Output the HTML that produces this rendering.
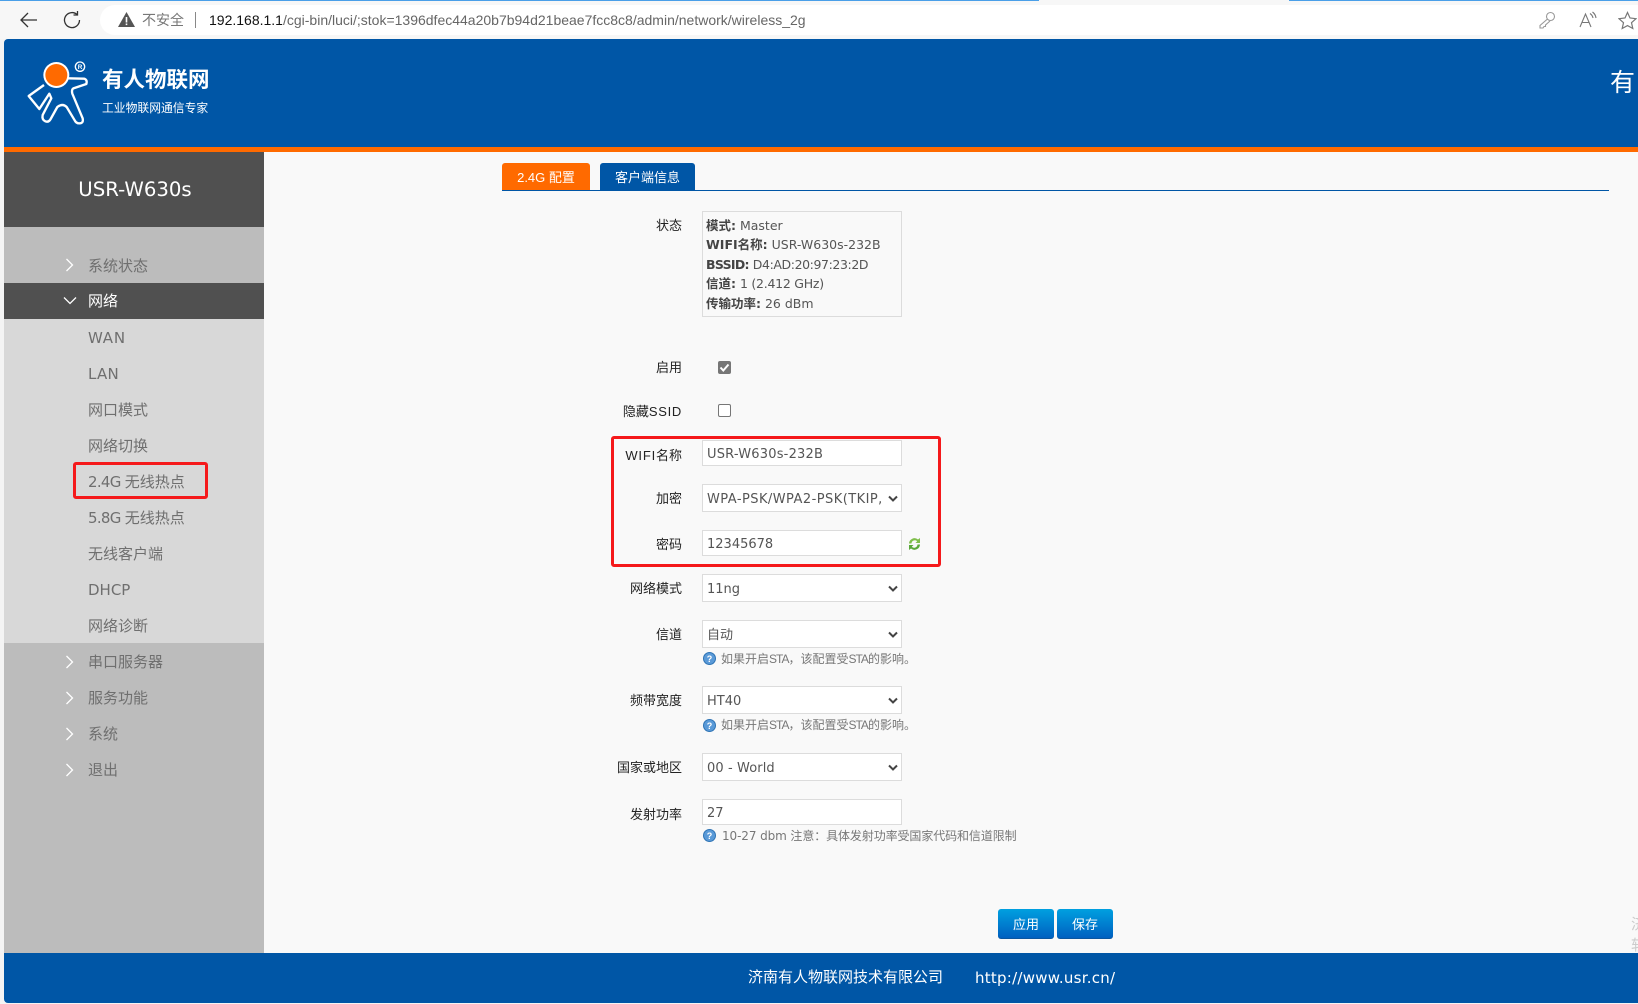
<!DOCTYPE html>
<html lang="zh-CN"><head><meta charset="utf-8"><title>USR-W630s</title>
<style>
html,body{margin:0;padding:0;width:1638px;height:1004px;overflow:hidden;background:#f4f4f4}
body{position:relative;font-family:"Liberation Sans","Noto Sans CJK SC",sans-serif}
.a{position:absolute;white-space:nowrap}
.d{font-family:"DejaVu Sans","Noto Sans CJK SC",sans-serif}
.nav{position:absolute;left:88px;height:24px;line-height:24px;font-size:15px;color:#6f6f6f;white-space:nowrap;font-family:"DejaVu Sans","Noto Sans CJK SC",sans-serif}
.lb{position:absolute;right:956px;height:20px;line-height:20px;font-size:13px;color:#222;white-space:nowrap;text-align:right;font-family:"Liberation Sans","Noto Sans CJK SC",sans-serif}
.f{position:absolute;left:702px;width:198px;background:#fff;border:1px solid #dcdcdc;color:#555;font:13px/28px "DejaVu Sans","Noto Sans CJK SC",sans-serif;white-space:nowrap;overflow:hidden;text-indent:4px}
.f svg{position:absolute;right:3px;top:50%;margin-top:-3px}
.h{position:absolute;left:721px;height:16px;line-height:16px;font-size:12px;color:#777;white-space:nowrap}
.h span{letter-spacing:-1px}
.q{position:absolute;left:703px;width:13px;height:13px}
.ch{position:absolute;left:65px}
b{color:#444}
</style></head><body>
<!-- browser chrome -->
<div class="a" style="left:0;top:0;width:1638px;height:39px;background:#f7f7f7"></div>
<div class="a" style="left:0;top:0;width:1039px;height:1px;background:#4a9fe8"></div>
<div class="a" style="left:1289px;top:0;width:349px;height:1px;background:#4a9fe8"></div>
<div class="a" style="left:100px;top:5px;width:1538px;height:30px;background:#fff;border-radius:15px 0 0 15px"></div>
<svg class="a" style="left:18px;top:10px" width="20" height="20" viewBox="0 0 20 20" fill="none" stroke="#333" stroke-width="1.3"><path d="M19 10H3M10 3L3 10L10 17"/></svg>
<svg class="a" style="left:62px;top:10px" width="20" height="20" viewBox="0 0 20 20" fill="none" stroke="#333" stroke-width="1.3"><path d="M15 4.5A7.5 7.5 0 1 0 17.5 10"/><path d="M15.5 1V5H11.5"/></svg>
<svg class="a" style="left:118px;top:12px" width="17" height="15" viewBox="0 0 17 15"><path d="M8.5 0L17 15H0Z" fill="#555"/><rect x="7.7" y="5" width="1.6" height="5.5" fill="#fff"/><rect x="7.7" y="11.5" width="1.6" height="1.6" fill="#fff"/></svg>
<div class="a" style="left:142px;top:10px;height:20px;line-height:20px;font-size:14px;color:#777">不安全</div>
<div class="a" style="left:195px;top:12px;width:1px;height:16px;background:#888"></div>
<div class="a" style="left:209px;top:10px;height:20px;line-height:20px;font-size:14px;color:#666"><span style="color:#111">192.168.1.1</span>/cgi-bin/luci/;stok=1396dfec44a20b7b94d21beae7fcc8c8/admin/network/wireless_2g</div>
<svg class="a" style="left:1537px;top:11px" width="20" height="18" viewBox="0 0 20 18" fill="none" stroke="#999" stroke-width="1.1"><circle cx="13.5" cy="5.5" r="4"/><path d="M10.5 8L3 14.5V17H6L7 15.5H8.5V14L13 10"/></svg>
<svg class="a" style="left:1578px;top:11px" width="20" height="18" viewBox="0 0 20 18" fill="none" stroke="#777" stroke-width="1.1"><path d="M2 16L7.5 3L13 16M4 11.5H11"/><path d="M12 2.5A7 7 0 0 1 15 7M14.5 1A9 9 0 0 1 18 7"/></svg>
<svg class="a" style="left:1618px;top:11px" width="19" height="19" viewBox="0 0 19 19" fill="none" stroke="#777" stroke-width="1.2"><path d="M9.5 1.5L12 7L18 7.7L13.5 11.7L14.8 17.5L9.5 14.6L4.2 17.5L5.5 11.7L1 7.7L7 7Z"/></svg>

<!-- page -->
<div class="a" style="left:4px;top:39px;width:1634px;height:964px;background:#f9f9f9;border-radius:4px 0 0 4px;overflow:hidden">
  <div class="a" style="left:0;top:0;width:1634px;height:108px;background:#0056a6"></div>
  <div class="a" style="left:0;top:108px;width:1634px;height:5px;background:#ff6a00"></div>
  <div class="a" style="left:0;top:113px;width:260px;height:801px;background:#bcbcbc"></div>
  <div class="a" style="left:0;top:113px;width:260px;height:75px;background:#505050"></div>
  <div class="a" style="left:0;top:244px;width:260px;height:36px;background:#505050"></div>
  <div class="a" style="left:0;top:280px;width:260px;height:324px;background:#d8d8d8"></div>
  <div class="a" style="left:0;top:914px;width:1634px;height:50px;background:#0056a6"></div>
</div>

<!-- logo -->
<svg class="a" style="left:22px;top:55px" width="72" height="75" viewBox="0 0 216 225">
<path d="M138 70L186 71Q197 74 193 87L154 100Q148 104 151 116L182 190Q185 205 173 205Q163 206 158 196L134 156Q122 144 106 156L86 192Q80 203 70 199Q59 194 62 180L88 130L82 116L52 162L20 123L66 90" fill="none" stroke="#fff" stroke-width="7" stroke-linejoin="round"/>
<circle cx="103" cy="60" r="39" fill="#fff"/><circle cx="103" cy="60" r="33" fill="#ff6a00"/>
<circle cx="174" cy="35" r="14" fill="none" stroke="#fff" stroke-width="4"/>
<text x="174" y="42" font-size="19" font-weight="bold" fill="#fff" text-anchor="middle" font-family="Liberation Sans">R</text>
</svg>
<div class="a" style="left:102px;top:67px;height:26px;line-height:26px;font-size:21.5px;font-weight:bold;color:#fff">有人物联网</div>
<div class="a" style="left:102px;top:99px;height:18px;line-height:18px;font-size:11.8px;color:#fff">工业物联网通信专家</div>
<div class="a" style="left:1610px;top:67px;height:32px;line-height:32px;font-size:25px;color:#fff">有</div>

<!-- sidebar -->
<div class="a d" style="left:5px;width:260px;top:176px;height:28px;line-height:28px;text-align:center;font-size:19.7px;color:#fff">USR-W630s</div>
<svg class="ch" style="top:258px" width="9" height="14" viewBox="0 0 9 14" fill="none" stroke="#fff" stroke-width="1.3"><path d="M1.5 1L7.5 7L1.5 13"/></svg>
<svg class="ch" style="left:63px;top:296px" width="14" height="9" viewBox="0 0 14 9" fill="none" stroke="#fff" stroke-width="1.3"><path d="M1 1.5L7 7.5L13 1.5"/></svg>
<svg class="ch" style="top:655px" width="9" height="14" viewBox="0 0 9 14" fill="none" stroke="#fff" stroke-width="1.3"><path d="M1.5 1L7.5 7L1.5 13"/></svg>
<svg class="ch" style="top:691px" width="9" height="14" viewBox="0 0 9 14" fill="none" stroke="#fff" stroke-width="1.3"><path d="M1.5 1L7.5 7L1.5 13"/></svg>
<svg class="ch" style="top:727px" width="9" height="14" viewBox="0 0 9 14" fill="none" stroke="#fff" stroke-width="1.3"><path d="M1.5 1L7.5 7L1.5 13"/></svg>
<svg class="ch" style="top:763px" width="9" height="14" viewBox="0 0 9 14" fill="none" stroke="#fff" stroke-width="1.3"><path d="M1.5 1L7.5 7L1.5 13"/></svg>
<div class="nav" style="top:254px">系统状态</div>
<div class="nav" style="top:289px;color:#fff">网络</div>
<div class="nav" style="top:326px;letter-spacing:.8px">WAN</div>
<div class="nav" style="top:362px;letter-spacing:.3px">LAN</div>
<div class="nav" style="top:398px">网口模式</div>
<div class="nav" style="top:434px">网络切换</div>
<div class="nav" style="top:470px"><span style="letter-spacing:-.7px">2.4G </span>无线热点</div>
<div class="nav" style="top:506px"><span style="letter-spacing:-.7px">5.8G </span>无线热点</div>
<div class="nav" style="top:542px">无线客户端</div>
<div class="nav" style="top:578px">DHCP</div>
<div class="nav" style="top:614px">网络诊断</div>
<div class="nav" style="top:650px">串口服务器</div>
<div class="nav" style="top:686px">服务功能</div>
<div class="nav" style="top:722px">系统</div>
<div class="nav" style="top:758px">退出</div>
<div class="a" style="left:73px;top:462px;width:129px;height:31px;border:3px solid #f5191b;border-radius:3px"></div>

<!-- tabs -->
<div class="a" style="left:502px;top:163px;width:88px;height:28px;line-height:29px;background:#ff6a00;border-radius:3px 3px 0 0;color:#fff;font-size:13px;text-align:center">2.4G 配置</div>
<div class="a" style="left:600px;top:163px;width:95px;height:28px;line-height:29px;background:#0056a6;border-radius:3px 3px 0 0;color:#fff;font-size:13px;text-align:center">客户端信息</div>
<div class="a" style="left:502px;top:190px;width:1107px;height:1px;background:#0056a6"></div>

<!-- status -->
<div class="lb" style="top:216px">状态</div>
<div class="a d" style="left:702px;top:211px;width:198px;height:104px;background:#f9f9f9;border:1px solid #dcdcdc;font-size:12.5px;line-height:19.5px;color:#555;padding:0;white-space:nowrap;">
<div style="padding:3.5px 0 0 3px"><b>模式:</b> Master<br><b>WIFI名称:</b> USR-W630s-232B<br><b style="letter-spacing:-.7px">BSSID:</b> <span style="letter-spacing:-.4px">D4:AD:20:97:23:2D</span><br><b>信道:</b> <span style="letter-spacing:-.25px">1 (2.412 GHz)</span><br><b>传输功率:</b> 26 dBm</div></div>

<div class="lb" style="top:358px">启用</div>
<div class="a" style="left:718px;top:361px;width:13px;height:13px;background:#767676;border-radius:2px"><svg width="13" height="13" viewBox="0 0 13 13" fill="none" stroke="#fff" stroke-width="2"><path d="M2.5 6.5L5.3 9.5L10.5 3.5"/></svg></div>
<div class="lb" style="top:402px"><span>隐藏</span><span style="letter-spacing:.7px">SSID</span></div>
<div class="a" style="left:718px;top:404px;width:11px;height:11px;background:#fff;border:1px solid #767676;border-radius:2px"></div>

<div class="lb" style="top:446px"><span style="letter-spacing:.8px">WIFI</span>名称</div>
<div class="f" style="top:440px;height:24px;letter-spacing:.2px">USR-W630s-232B</div>
<div class="lb" style="top:489px">加密</div>
<div class="f" style="top:484px;height:26px;line-height:30px;letter-spacing:.45px">WPA-PSK/WPA2-PSK(TKIP,<div style="position:absolute;right:0;top:0;width:17px;height:26px;background:#fff"></div><svg width="10" height="8" viewBox="0 0 10 8" fill="none" stroke="#444" stroke-width="2"><path d="M1 1.5L5 5.5L9 1.5"/></svg></div>
<div class="lb" style="top:535px">密码</div>
<div class="f" style="top:530px;height:24px">12345678</div>
<svg class="a" style="left:908px;top:537px" width="13" height="14" viewBox="0 0 13 14"><path d="M1 6.5A5.5 5.5 0 0 1 10 2.5L12 1V6H7.5L9.2 4.2A3.4 3.4 0 0 0 3.5 6.5Z" fill="#7fbe4b"/><path d="M12 7.5A5.5 5.5 0 0 1 3 11.5L1 13V8H5.5L3.8 9.8A3.4 3.4 0 0 0 9.5 7.5Z" fill="#5aa83a"/></svg>
<div class="a" style="left:611px;top:436px;width:324px;height:125px;border:3px solid #f5191b;border-radius:3px"></div>

<div class="lb" style="top:579px">网络模式</div>
<div class="f" style="top:574px;height:26px;line-height:30px">11ng<svg width="10" height="8" viewBox="0 0 10 8" fill="none" stroke="#444" stroke-width="2"><path d="M1 1.5L5 5.5L9 1.5"/></svg></div>
<div class="lb" style="top:625px">信道</div>
<div class="f" style="top:620px;height:26px;line-height:30px">自动<svg width="10" height="8" viewBox="0 0 10 8" fill="none" stroke="#444" stroke-width="2"><path d="M1 1.5L5 5.5L9 1.5"/></svg></div>
<svg class="q" style="top:652px" viewBox="0 0 13 13"><circle cx="6.5" cy="6.5" r="6" fill="#5a9ad8" stroke="#2f74b5"/><text x="6.5" y="10" font-size="9" font-weight="bold" fill="#fff" text-anchor="middle" font-family="Liberation Sans">?</text></svg>
<div class="h" style="top:651px">如果开启<span>STA</span>，该配置受<span>STA</span>的影响。</div>

<div class="lb" style="top:691px">频带宽度</div>
<div class="f" style="top:686px;height:26px;line-height:30px">HT40<svg width="10" height="8" viewBox="0 0 10 8" fill="none" stroke="#444" stroke-width="2"><path d="M1 1.5L5 5.5L9 1.5"/></svg></div>
<svg class="q" style="top:719px" viewBox="0 0 13 13"><circle cx="6.5" cy="6.5" r="6" fill="#5a9ad8" stroke="#2f74b5"/><text x="6.5" y="10" font-size="9" font-weight="bold" fill="#fff" text-anchor="middle" font-family="Liberation Sans">?</text></svg>
<div class="h" style="top:717px">如果开启<span>STA</span>，该配置受<span>STA</span>的影响。</div>

<div class="lb" style="top:758px">国家或地区</div>
<div class="f" style="top:753px;height:26px;line-height:30px;letter-spacing:.1px">00 - World<svg width="10" height="8" viewBox="0 0 10 8" fill="none" stroke="#444" stroke-width="2"><path d="M1 1.5L5 5.5L9 1.5"/></svg></div>
<div class="lb" style="top:805px">发射功率</div>
<div class="f" style="top:799px;height:24px">27</div>
<svg class="q" style="top:829px" viewBox="0 0 13 13"><circle cx="6.5" cy="6.5" r="6" fill="#5a9ad8" stroke="#2f74b5"/><text x="6.5" y="10" font-size="9" font-weight="bold" fill="#fff" text-anchor="middle" font-family="Liberation Sans">?</text></svg>
<div class="h d" style="left:722px;top:828px;letter-spacing:-.1px">10-27 dbm 注意：具体发射功率受国家代码和信道限制</div>

<!-- buttons -->
<div class="a" style="left:998px;top:909px;width:56px;height:30px;line-height:31px;background:linear-gradient(#00a0e0,#0060c0);border-radius:3px;border-bottom:1px solid #0a56a0;box-sizing:border-box;color:#fff;font-size:13px;text-align:center">应用</div>
<div class="a" style="left:1057px;top:909px;width:56px;height:30px;line-height:31px;background:linear-gradient(#00a0e0,#0060c0);border-radius:3px;border-bottom:1px solid #0a56a0;box-sizing:border-box;color:#fff;font-size:13px;text-align:center">保存</div>

<!-- watermark -->
<div class="a" style="left:1631px;top:914px;width:7px;height:39px;overflow:hidden;color:#ccc;font-size:15px;line-height:21px">济<br>软</div>

<!-- footer -->
<div class="a" style="left:748px;top:968px;height:20px;line-height:20px;font-size:15px;color:#fff">济南有人物联网技术有限公司</div>
<div class="a d" style="left:975px;top:968px;height:20px;line-height:20px;font-size:15px;letter-spacing:.25px;color:#fff">http://www.usr.cn/</div>
</body></html>
